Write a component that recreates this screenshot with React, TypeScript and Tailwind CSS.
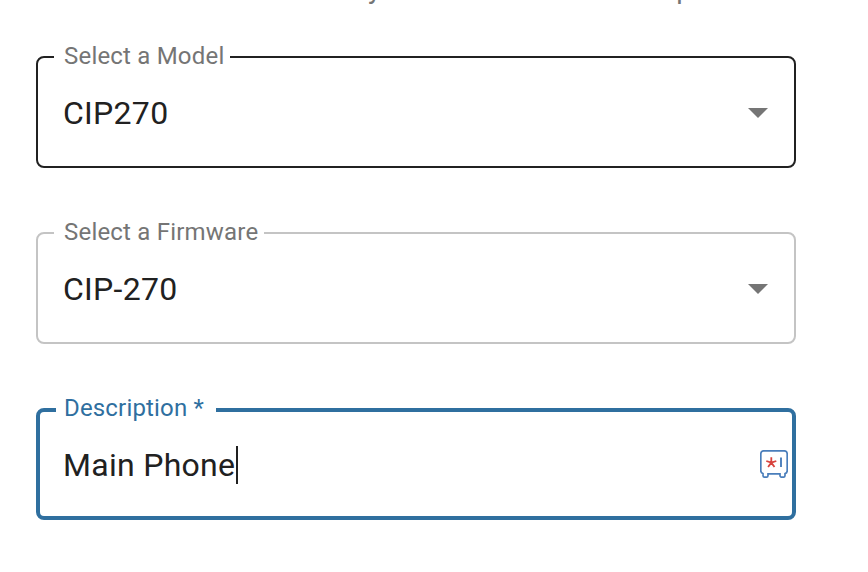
import type { ReactNode } from 'react';
import clsx from 'clsx';

type FieldProps = {
  label: string;
  value: string;
  frame: string;
  labelStyle: string;
  children?: ReactNode;
};

function OutlinedField({ label, value, frame, labelStyle, children }: FieldProps) {
  return (
    <div className={clsx('relative flex h-[112px] w-full items-center rounded-lg pt-[2px]', frame)}>
      {/* floating label sits on top of the border */}
      <span className={clsx('absolute bg-white text-[24px] leading-7 whitespace-nowrap', labelStyle)}>{label}</span>
      <span className="text-[32px] leading-9 tracking-[0.29px] whitespace-nowrap text-[#212121]">{value}</span>
      {children}
    </div>
  );
}

function SelectArrow() {
  return (
    <svg className="ml-auto shrink-0" width="20" height="10" viewBox="0 0 20 10">
      <path d="M0 0h20L10 10z" fill="#757575" />
    </svg>
  );
}

function PasswordSafeIcon() {
  return (
    <svg className="mb-[2px] ml-auto shrink-0" width="28" height="28" viewBox="0 0 28 28" fill="none">
      <path
        d="M3.7 .8h20.6a2.9 2.9 0 0 1 2.9 2.9v17.1a2.9 2.9 0 0 1-2.2 2.8v1.9a1.7 1.7 0 0 1-1.7 1.7h-1.6a1.7 1.7 0 0 1-1.7-1.7v-1.7H8v1.7a1.7 1.7 0 0 1-1.7 1.7H4.7A1.7 1.7 0 0 1 3 25.5v-1.9A2.9 2.9 0 0 1 .8 20.8V3.7A2.9 2.9 0 0 1 3.7.8z"
        stroke="#4a7ebb"
        strokeWidth="1.7"
      />
      <path d="M11.3 12.6V7.3M11.3 12.6l5-1.6M11.3 12.6l3.2 4.4M11.3 12.6l-3.2 4.4M11.3 12.6l-5-1.6" stroke="#d8433d" strokeWidth="1.8" />
      <path d="M21 7.5V17" stroke="#4a7ebb" strokeWidth="1.9" />
    </svg>
  );
}

export default function App() {
  return (
    <div className="h-[572px] w-[868px] overflow-hidden bg-white font-[Roboto,sans-serif]">
      {/* last line of the intro text, scrolled almost out of view */}
      <div className="flex h-14 items-start overflow-hidden pl-[368px] text-[28px] leading-8 text-[#757575]">
        <p className="-mt-[27px] flex w-[324px] justify-between">
          <span>y</span>
          <span>p</span>
        </p>
      </div>

      <form className="flex w-[796px] flex-col gap-16 pl-9">
        <OutlinedField
          label="Select a Model"
          value="CIP270"
          frame="border-2 border-[#212121] pl-[25px] pr-[26px]"
          labelStyle="-top-[16px] left-4 pl-[10px] pr-[6px] tracking-[0.2px] text-[#757575]"
        >
          <SelectArrow />
        </OutlinedField>
        <OutlinedField
          label="Select a Firmware"
          value="CIP-270"
          frame="border-2 border-[#c4c4c4] pl-[25px] pr-[26px]"
          labelStyle="-top-[16px] left-4 pl-[10px] pr-[6px] tracking-[0.2px] text-[#757575]"
        >
          <SelectArrow />
        </OutlinedField>
        <OutlinedField
          label="Description *"
          value="Main Phone"
          frame="border-4 border-[#2f6f9f] pl-[23px] pr-1"
          labelStyle="-top-[18px] left-4 pl-2 pr-3 tracking-[0.17px] text-[#2f6f9f]"
        >
          <span className="ml-px h-[38px] w-[2px] bg-[#212121]" />
          <PasswordSafeIcon />
        </OutlinedField>
      </form>
    </div>
  );
}
